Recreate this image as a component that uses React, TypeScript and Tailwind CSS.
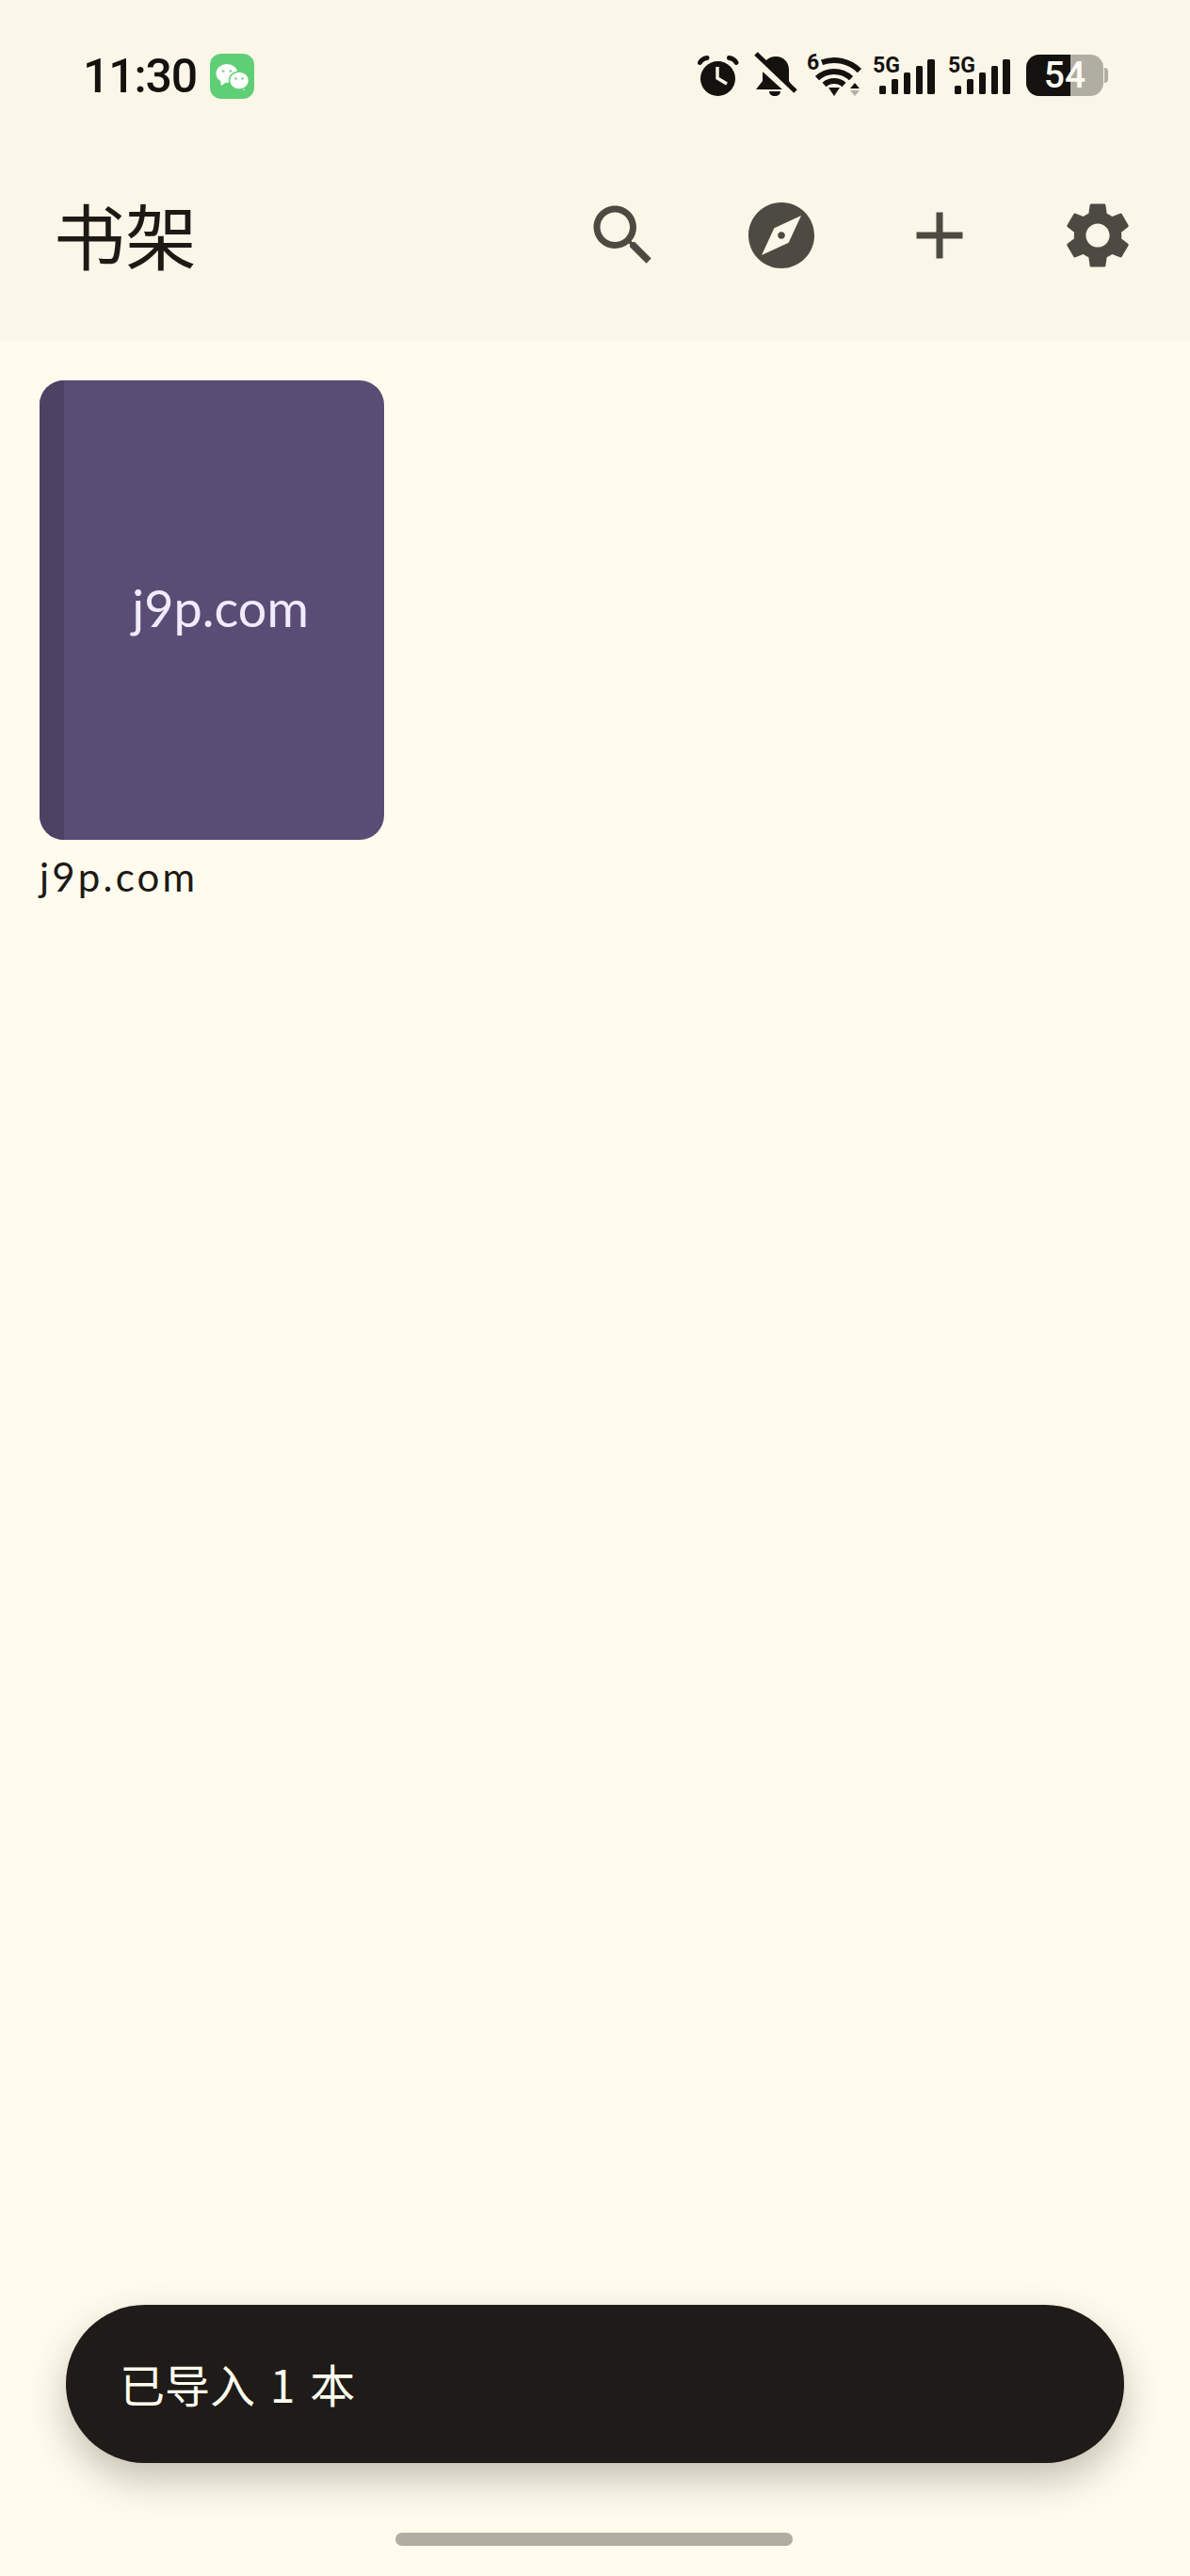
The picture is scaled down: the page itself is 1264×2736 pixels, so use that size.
import React from 'react'

const CJK = "font-['Noto_Sans_CJK_SC','Noto_Sans',sans-serif]"

const WeChatIcon = () => (
  <svg width="47" height="48" viewBox="0 0 47 48" className="mt-[2px]">
    <rect width="47" height="48" rx="12" fill="#5FCF76" />
    <path d="M11 29l1 5 5-3.5z" fill="#fff" />
    <ellipse cx="18" cy="21" rx="11.5" ry="10" fill="#fff" />
    <circle cx="14" cy="18.5" r="1.5" fill="#8fd8a0" />
    <circle cx="22" cy="18.5" r="1.5" fill="#8fd8a0" />
    <path d="M35 35l2 4-6-2z" fill="#fff" />
    <ellipse cx="31" cy="28.5" rx="10.5" ry="9.5" fill="#fff" stroke="#5FCF76" strokeWidth="1.5" />
    <circle cx="27.5" cy="26.5" r="1.4" fill="#8fd8a0" />
    <circle cx="34.5" cy="26.5" r="1.4" fill="#8fd8a0" />
  </svg>
)

const AlarmIcon = () => (
  <svg width="44" height="44" viewBox="0 0 44 44" className="mt-[4px]">
    <circle cx="21.5" cy="24.5" r="18.5" fill="#14120F" />
    <path d="M2.5 7.5C4 4.5 7 3 10 2.5" fill="none" stroke="#14120F" strokeWidth="5" strokeLinecap="round" />
    <path d="M41 7.5C39.5 4.5 36.5 3 33.5 2.5" fill="none" stroke="#14120F" strokeWidth="5" strokeLinecap="round" />
    <path d="M21 12v12l10 6" fill="none" stroke="#FAF6E8" strokeWidth="3.5" />
  </svg>
)

const MutedBellIcon = () => (
  <svg width="48" height="50" viewBox="0 0 48 50" className="ml-[15px]">
    <path d="M3 40l7-9V19C10 11 16 5 24 5s14 6 14 14v12l5 9z" fill="#14120F" />
    <path d="M17 42h12c0 3-2.5 5-6 5s-6-2-6-5z" fill="#14120F" />
    <path d="M-1 5l44 40" stroke="#FAF6E8" strokeWidth="9" />
    <path d="M3 2l42 40" stroke="#14120F" strokeWidth="5" />
  </svg>
)

const WifiIcon = () => (
  <svg width="58" height="46" viewBox="0 0 58 46" className="ml-[9px] mt-[2px] overflow-visible">
    <text x="0" y="17" fontSize="23" fontWeight="700" fill="#14120F" fontFamily="Roboto, sans-serif">6</text>
    <path d="M16 9.3A38 38 0 0 1 55.9 18.1" fill="none" stroke="#14120F" strokeWidth="6" />
    <path d="M11 26.2A26 26 0 0 1 47 26.2" fill="none" stroke="#14120F" strokeWidth="6" />
    <path d="M18.5 33A16 16 0 0 1 39.5 33" fill="none" stroke="#14120F" strokeWidth="6" />
    <path d="M23 36h12l-6 9z" fill="#14120F" />
    <path d="M46 37l5-6 5 6z" fill="#14120F" />
    <path d="M46 39l5 6 5-6z" fill="#B0ADA2" />
  </svg>
)

const SignalIcon = ({ className }: { className: string }) => (
  <svg width="66" height="44" viewBox="0 0 66 44" className={`overflow-visible ${className}`}>
    <text x="0" y="19" fontSize="23" fontWeight="700" fill="#14120F" fontFamily="Roboto, sans-serif">5G</text>
    <rect x="7" y="33" width="7" height="9" rx="1.5" fill="#14120F" />
    <rect x="20" y="26" width="7" height="16" rx="1.5" fill="#14120F" />
    <rect x="33" y="19" width="7" height="23" rx="1.5" fill="#14120F" />
    <rect x="46" y="12" width="7" height="30" rx="1.5" fill="#14120F" />
    <rect x="58" y="5" width="8" height="37" rx="1.5" fill="#14120F" />
  </svg>
)

const Battery = () => (
  <div className="ml-[17px] mt-[3px] flex items-center">
    <div className="relative flex h-[44px] w-[82px] overflow-hidden rounded-[14px] bg-[#B0ADA2]">
      <div className="h-full w-[47px] bg-[#14120F]" />
      <span className="absolute inset-0 flex items-center justify-center font-['Roboto',sans-serif] text-[39px] font-medium leading-none text-[#FDFBF2]">
        54
      </span>
    </div>
    <div className="ml-[1px] h-[16px] w-[4px] rounded-r-full bg-[#B0ADA2]" />
  </div>
)

const StatusBar = () => (
  <div className="flex h-[166px] items-start pl-[88px] pr-[87px] pt-[55px]">
    <span className="mt-[1px] w-[135px] font-['Roboto',sans-serif] text-[50px] font-medium leading-[50px] tracking-[-1.2px] text-[#14120F]">
      11:30
    </span>
    <WeChatIcon />
    <div className="ml-auto flex items-start">
      <AlarmIcon />
      <MutedBellIcon />
      <WifiIcon />
      <SignalIcon className="ml-[12px] mt-[3px]" />
      <SignalIcon className="ml-[14px] mt-[3px]" />
      <Battery />
    </div>
  </div>
)

const iconPaths = [
  'M15.5 14h-.79l-.28-.27C15.41 12.59 16 11.11 16 9.5 16 5.91 13.09 3 9.5 3S3 5.91 3 9.5 5.91 16 9.5 16c1.61 0 3.09-.59 4.23-1.57l.27.28v.79l5 4.99L20.49 19l-4.99-5zm-6 0C7.01 14 5 11.99 5 9.5S7.01 5 9.5 5 14 7.01 14 9.5 11.99 14 9.5 14z',
  'M12 10.9c-.61 0-1.1.49-1.1 1.1s.49 1.1 1.1 1.1c.61 0 1.1-.49 1.1-1.1s-.49-1.1-1.1-1.1zM12 2C6.48 2 2 6.48 2 12s4.48 10 10 10 10-4.48 10-10S17.52 2 12 2zm2.19 12.19L6 18l3.81-8.19L18 6l-3.81 8.19z',
  'M19 13h-6v6h-2v-6H5v-2h6V5h2v6h6v2z',
  'M19.14 12.94c.04-.3.06-.61.06-.94 0-.32-.02-.64-.07-.94l2.03-1.58c.18-.14.23-.41.12-.61l-1.92-3.32c-.12-.22-.37-.29-.59-.22l-2.39.96c-.5-.38-1.03-.7-1.62-.94l-.36-2.54c-.04-.24-.24-.41-.48-.41h-3.84c-.24 0-.43.17-.47.41l-.36 2.54c-.59.24-1.13.57-1.62.94l-2.39-.96c-.22-.08-.47 0-.59.22L2.74 8.87c-.12.21-.08.47.12.61l2.03 1.58c-.05.3-.09.63-.09.94s.02.64.07.94l-2.03 1.58c-.18.14-.23.41-.12.61l1.92 3.32c.12.22.37.29.59.22l2.39-.96c.5.38 1.03.7 1.62.94l.36 2.54c.05.24.24.41.48.41h3.84c.24 0 .44-.17.47-.41l.36-2.54c.59-.24 1.13-.56 1.62-.94l2.39.96c.22.08.47 0 .59-.22l1.92-3.32c.12-.22.07-.47-.12-.61l-2.01-1.58zM12 15.6c-1.98 0-3.6-1.62-3.6-3.6s1.62-3.6 3.6-3.6 3.6 1.62 3.6 3.6-1.62 3.6-3.6 3.6z',
]

const Toolbar = () => (
  <div className="flex h-[168px] items-center pl-[57px] pr-[14px]">
    <h1 className={`${CJK} -mt-[4px] text-[76px] font-normal leading-none text-[#1D1A16]`}>书架</h1>
    <div className="ml-auto flex">
      {iconPaths.map((d) => (
        <div key={d} className="flex h-[168px] w-[168px] items-center justify-center">
          <svg width="84" height="84" viewBox="0 0 24 24" fill="#4D4A42">
            <path d={d} />
          </svg>
        </div>
      ))}
    </div>
  </div>
)

const Book = () => (
  <div className="w-[366px]">
    <div className="flex h-[488px] overflow-hidden rounded-[26px] bg-[#5A4D75]">
      <div className="h-full w-[26px] bg-[#4D4164]" />
      <div className="flex flex-1 items-center justify-center pb-[6px] pr-[8px] font-['Lato',sans-serif] text-[54px] text-[#F0EBFF]">
        j9p.com
      </div>
    </div>
    <p className="mt-[14px] font-['Lato',sans-serif] text-[42px] leading-[50px] tracking-[3.2px] text-[#1D1A16]">
      j9p.com
    </p>
  </div>
)

export default function App() {
  return (
    <div className="flex h-[2736px] w-[1264px] flex-col overflow-hidden bg-[#FFFCEE]">
      <header className="h-[362px] bg-[#FAF6E8]">
        <StatusBar />
        <Toolbar />
      </header>
      <main className="flex flex-1 flex-col pl-[42px] pt-[42px]">
        <Book />
      </main>
      <div
        className={`${CJK} mx-[70px] flex h-[168px] items-center rounded-full bg-[#1E1B18] pb-[3px] pl-[57px] text-[48px] font-normal [word-spacing:5px] text-[#FFFCEE] shadow-[0_18px_40px_rgba(60,55,40,0.3)]`}
      >
        已导入 1 本
      </div>
      <div className="mb-[32px] ml-[420px] mt-[74px] h-[14px] w-[422px] rounded-full bg-[#B0ADA2]" />
    </div>
  )
}
